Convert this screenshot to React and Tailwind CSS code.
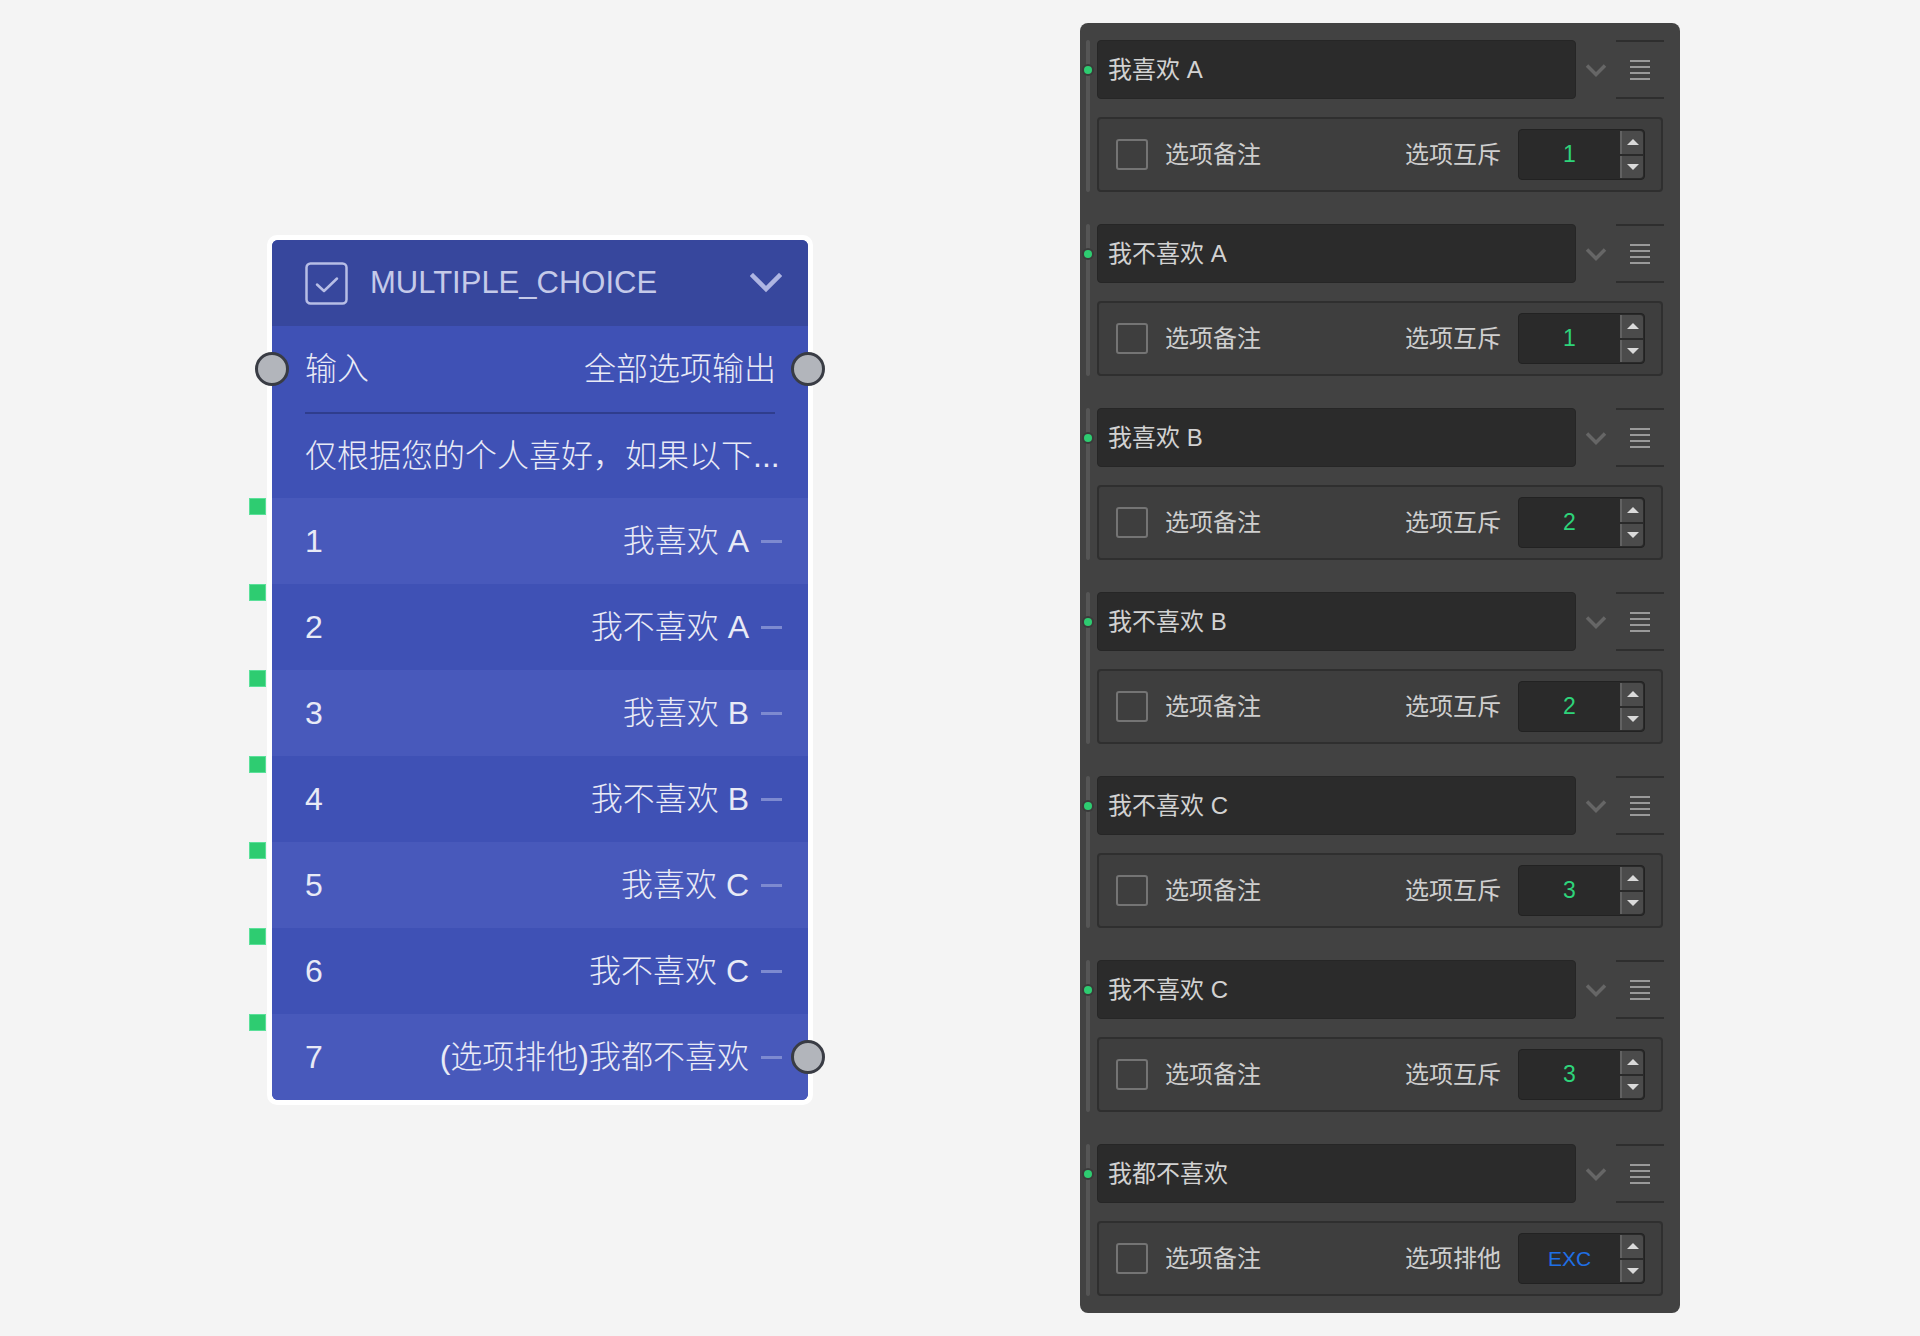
const font = { fontFamily: '"Liberation Sans", "Noto Sans CJK SC", sans-serif' }

const rows = [
  { n: '1', label: '我喜欢 A' },
  { n: '2', label: '我不喜欢 A' },
  { n: '3', label: '我喜欢 B' },
  { n: '4', label: '我不喜欢 B' },
  { n: '5', label: '我喜欢 C' },
  { n: '6', label: '我不喜欢 C' },
  { n: '7', label: '(选项排他)我都不喜欢', port: true },
]

const groups = [
  { label: '我喜欢 A', kind: '选项互斥', value: '1' },
  { label: '我不喜欢 A', kind: '选项互斥', value: '1' },
  { label: '我喜欢 B', kind: '选项互斥', value: '2' },
  { label: '我不喜欢 B', kind: '选项互斥', value: '2' },
  { label: '我不喜欢 C', kind: '选项互斥', value: '3' },
  { label: '我不喜欢 C', kind: '选项互斥', value: '3' },
  { label: '我都不喜欢', kind: '选项排他', value: 'EXC', exc: true },
]

function Port({ side }) {
  return (
    <div
      className={
        'absolute top-1/2 -translate-y-1/2 w-[34px] h-[34px] rounded-full bg-[#b2b5bb] border-[3px] border-[#393c44] ' +
        (side === 'left' ? 'left-[-17px]' : 'right-[-17px]')
      }
    />
  )
}

function ChoiceNode() {
  return (
    <div className="mt-[235px] w-[546px] rounded-[10px] border-[5px] border-white bg-white shrink-0">
      <div className="rounded-[6px] bg-[#3f51b5] text-[#e8eaf6]">
        {/* header */}
        <div className="h-[86px] flex items-center pl-[33px] pr-[26px] bg-[#37479d] rounded-t-[6px]">
          <svg width="43" height="43" viewBox="0 0 43 43" fill="none">
            <rect x="1.5" y="1.5" width="40" height="40" rx="4" stroke="#b7bee6" strokeWidth="2.5" />
            <path d="M12 22.5l7 6.5 13-12.5" stroke="#b7bee6" strokeWidth="2.5" strokeLinecap="round" strokeLinejoin="round" />
          </svg>
          <span className="ml-[22px] text-[31px] text-[#c5cae9]">MULTIPLE_CHOICE</span>
          <svg className="ml-auto" width="32" height="20" viewBox="0 0 32 20" fill="none">
            <path d="M3 3l13 13 13-13" stroke="#aeb5e2" strokeWidth="4.5" strokeLinecap="square" />
          </svg>
        </div>

        {/* input / output */}
        <div className="relative h-[86px] flex items-center justify-between pl-[33px] pr-[32px] text-[32px] font-light">
          <span>输入</span>
          <span>全部选项输出</span>
          <Port side="left" />
          <Port side="right" />
        </div>
        <div className="mx-[33px] h-[2px] bg-[#2f3d8d]" />

        {/* description */}
        <div className="h-[84px] flex items-center pl-[33px] text-[32px] font-light whitespace-nowrap">
          仅根据您的个人喜好，如果以下...
        </div>

        {/* options */}
        {rows.map((r, i) => (
          <div
            key={r.n}
            className={
              'relative h-[86px] flex items-center pl-[33px] pr-[26px] text-[32px] font-light ' +
              (i % 2 === 0 ? 'bg-[#4859bb]' : 'bg-[#3f51b5]') +
              (i === rows.length - 1 ? ' rounded-b-[6px]' : '')
            }
          >
            <div className="absolute left-[-23px] top-0 w-[17px] h-[17px] bg-[#2ecc71] border border-[#5be09a]" />
            <span>{r.n}</span>
            <span className="ml-auto">{r.label}</span>
            <div className="ml-[12px] w-[21px] h-[3px] bg-[#7d8ad0]" />
            {r.port && <Port side="right" />}
          </div>
        ))}
      </div>
    </div>
  )
}

function Spinner() {
  return (
    <div className="w-[23px] flex flex-col gap-[2px] py-[1px]">
      <div className="h-[23px] bg-[#4b4b4b] border-l-2 border-[#626262] rounded-tr-[3px] flex items-center justify-center">
        <div className="w-0 h-0 border-l-[6px] border-r-[6px] border-b-[6px] border-l-transparent border-r-transparent border-b-[#dadada]" />
      </div>
      <div className="h-[23px] bg-[#4b4b4b] border-l-2 border-[#626262] rounded-br-[3px] flex items-center justify-center">
        <div className="w-0 h-0 border-l-[6px] border-r-[6px] border-t-[6px] border-l-transparent border-r-transparent border-t-[#dadada]" />
      </div>
    </div>
  )
}

function OptionGroup({ g }) {
  return (
    <div className="flex gap-[7px]">
      <div className="relative w-[4px] rounded-full bg-[#555555]">
        <div className="absolute left-[-2px] top-[26px] w-[8px] h-[8px] rounded-full bg-[#2ecc71] ring-2 ring-[#3a3a3a]" />
      </div>
      <div className="flex-1">
        <div className="flex h-[59px]">
          <div className="w-[479px] rounded-[4px] bg-[#2b2b2b] border border-[#262626] flex items-center pl-[10px] text-[24px] text-[#d2d2d2]">
            {g.label}
          </div>
          <div className="w-[40px] flex items-center justify-center">
            <svg width="22" height="14" viewBox="0 0 22 14" fill="none">
              <path d="M2 2.5l9 9 9-9" stroke="#666666" strokeWidth="3.5" />
            </svg>
          </div>
          <div className="w-[48px] border-y-2 border-[#2e2e2e] flex flex-col items-center justify-center gap-[4px]">
            <div className="w-[20px] h-[2px] bg-[#9a9a9a]" />
            <div className="w-[20px] h-[2px] bg-[#9a9a9a]" />
            <div className="w-[20px] h-[2px] bg-[#9a9a9a]" />
            <div className="w-[20px] h-[2px] bg-[#9a9a9a]" />
          </div>
        </div>
        <div className="mt-[18px] mr-[1px] h-[75px] rounded-[4px] border-2 border-[#2f2f2f] bg-[#3e3e3e] flex items-center pl-[17px] pr-[16px] text-[24px] text-[#cfcfcf]">
          <div className="w-[32px] h-[31px] rounded-[3px] border-2 border-[#747474]" />
          <span className="ml-[17px]">选项备注</span>
          <span className="ml-auto">{g.kind}</span>
          <div className="ml-[17px] w-[127px] h-[51px] rounded-[4px] bg-[#2a2a2a] border border-[#222222] flex pr-[1px]">
            <div
              className={
                'flex-1 flex items-center justify-center ' +
                (g.exc ? 'text-[21px] text-[#1f6fe5]' : 'text-[23px] text-[#2ed47a]')
              }
            >
              {g.value}
            </div>
            <Spinner />
          </div>
        </div>
      </div>
    </div>
  )
}

export default function App() {
  return (
    <div className="w-[1920px] h-[1336px] bg-[#f4f4f4] flex items-start pl-[267px] gap-[267px]" style={font}>
      <ChoiceNode />
      <div className="mt-[23px] w-[600px] shrink-0 rounded-[8px] bg-[#424242] pt-[17px] pb-[17px] pl-[6px] pr-[16px] flex flex-col gap-[32px]">
        {groups.map((g, i) => (
          <OptionGroup key={i} g={g} />
        ))}
      </div>
    </div>
  )
}
